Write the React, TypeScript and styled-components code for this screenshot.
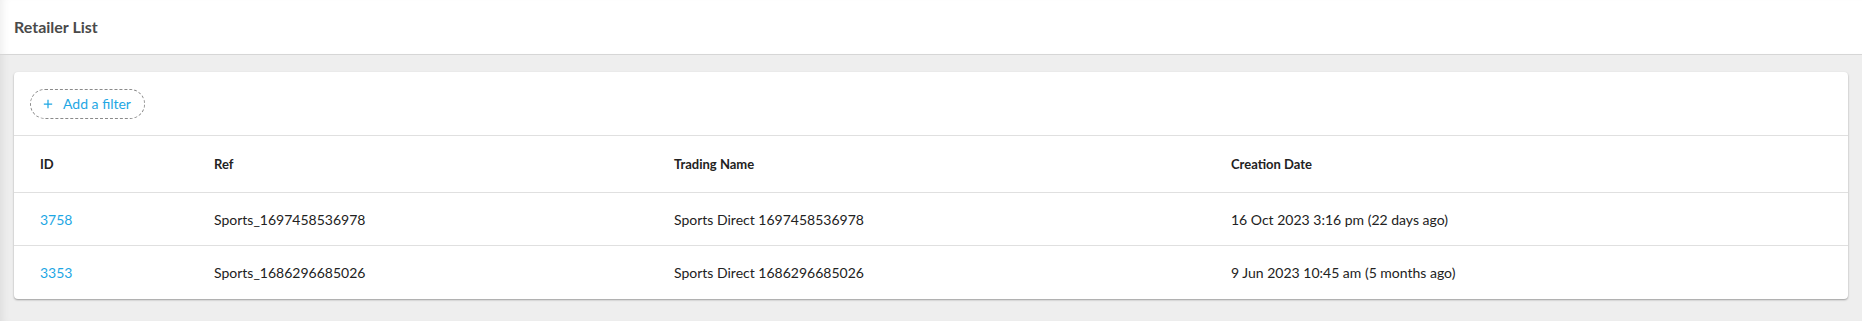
import React from "react";
import styled, { createGlobalStyle } from "styled-components";

const GlobalStyle = createGlobalStyle`
  html, body {
    margin: 0;
    padding: 0;
    background: #eeeeee;
    font-family: Lato, "Open Sans", sans-serif;
  }
`;

interface Retailer {
  id: number;
  ref: string;
  tradingName: string;
  created: string;
}

const retailers: Retailer[] = [
  {
    id: 3758,
    ref: "Sports_1697458536978",
    tradingName: "Sports Direct 1697458536978",
    created: "16 Oct 2023 3:16 pm (22 days ago)",
  },
  {
    id: 3353,
    ref: "Sports_1686296685026",
    tradingName: "Sports Direct 1686296685026",
    created: "9 Jun 2023 10:45 am (5 months ago)",
  },
];

const App: React.FC = () => {
  return (
    <Page>
      <GlobalStyle />
      <TopBar>
        <Title>Retailer List</Title>
      </TopBar>
      <Content>
        <Card>
          <Toolbar>
            <FilterButton type="button">
              <PlusIcon viewBox="0 0 12 12">
                <path d="M6 1v10M1 6h10" />
              </PlusIcon>
              Add a filter
            </FilterButton>
          </Toolbar>
          <HeaderRow>
            <HeadCell>ID</HeadCell>
            <HeadCell>Ref</HeadCell>
            <HeadCell>Trading Name</HeadCell>
            <HeadCell>Creation Date</HeadCell>
          </HeaderRow>
          {retailers.map((r) => (
            <Row key={r.id}>
              <LinkCell>{r.id}</LinkCell>
              <Cell>{r.ref}</Cell>
              <Cell>{r.tradingName}</Cell>
              <Cell>{r.created}</Cell>
            </Row>
          ))}
        </Card>
      </Content>
    </Page>
  );
};

export default App;

const Page = styled.div`
  min-height: 321px;
  background: #eeeeee;
  box-shadow: inset 8px 0 8px -6px rgba(0, 0, 0, 0.08);
`;

const TopBar = styled.header`
  height: 54px;
  background: #ffffff;
  border-bottom: 1px solid #d6d6d6;
  display: flex;
  align-items: center;
  padding: 0 14px;
  box-shadow: inset 8px 0 8px -6px rgba(0, 0, 0, 0.08);
`;

const Title = styled.h1`
  margin: 0;
  font-size: 16px;
  font-weight: 700;
  color: #4a4a4a;
  padding-bottom: 1px;
`;

const Content = styled.main`
  padding: 17px 14px 22px;
`;

const Card = styled.section`
  background: #ffffff;
  border-radius: 4px;
  box-shadow: 0 1px 2px rgba(0, 0, 0, 0.35);
  overflow: hidden;
`;

const Toolbar = styled.div`
  height: 63px;
  display: flex;
  align-items: center;
  padding: 0 16px;
  border-bottom: 1px solid #e0e0e0;
`;

const FilterButton = styled.button`
  height: 30px;
  display: inline-flex;
  align-items: center;
  gap: 10px;
  padding: 0 13px 0 12px;
  border: 1px dashed #8a8a8a;
  border-radius: 15px;
  background: transparent;
  color: #1ea7e4;
  font-family: Lato, "Open Sans", sans-serif;
  font-size: 14px;
  cursor: pointer;
`;

const PlusIcon = styled.svg`
  width: 10px;
  height: 10px;
  stroke: #1ea7e4;
  stroke-width: 1.5;
  fill: none;
`;

const columns = "174px 460px 557px 1fr";

const HeaderRow = styled.div`
  display: grid;
  grid-template-columns: ${columns};
  align-items: center;
  height: 56px;
  padding: 0 26px;
  border-bottom: 1px solid #e0e0e0;
`;

const HeadCell = styled.div`
  font-size: 13px;
  font-weight: 700;
  color: #222222;
`;

const Row = styled.div`
  display: grid;
  grid-template-columns: ${columns};
  align-items: center;
  height: 52px;
  padding: 0 26px;
  border-bottom: 1px solid #e0e0e0;

  &:last-child {
    border-bottom: none;
    height: 53px;
  }
`;

const Cell = styled.div`
  font-size: 14px;
  color: #222222;
`;

const LinkCell = styled(Cell)`
  color: #1ea7e4;
  cursor: pointer;
`;
